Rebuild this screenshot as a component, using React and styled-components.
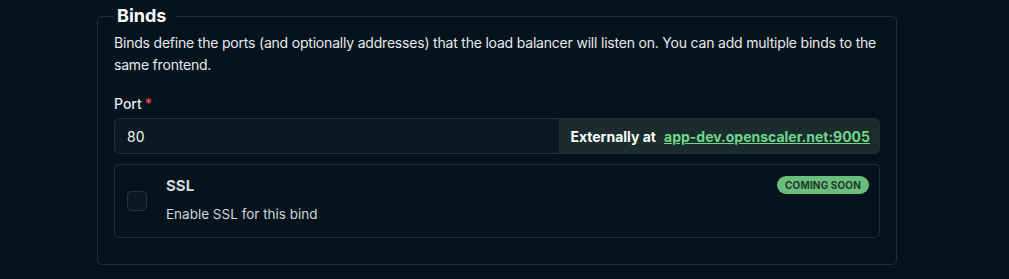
import React from "react";
import styled, { createGlobalStyle } from "styled-components";

const Global = createGlobalStyle`
  html, body { margin: 0; padding: 0; background: #04131c; }
  body { font-family: Inter, "Noto Sans", sans-serif; color: #e6eaee; }
  * { box-sizing: border-box; }
`;

const Page = styled.div`
  padding: 5px 112px 14px 97px;
`;

const Fieldset = styled.fieldset`
  margin: 0;
  border: 1px solid #1f2e38;
  border-radius: 5px;
  padding: 0 16px 26px 16px;
  min-width: 0;
`;

const Legend = styled.legend`
  font-size: 18px;
  font-weight: 700;
  color: #ffffff;
  padding: 0 9px 0 3px;
  line-height: 22px;
`;

const Description = styled.p`
  margin: 5px 0 0 0;
  font-size: 14px;
  line-height: 22px;
  letter-spacing: -0.2px;
  color: #e6eaee;
`;

const Label = styled.label`
  display: block;
  margin-top: 18px;
  font-size: 14px;
  font-weight: 500;
  line-height: 20px;
  color: #e6eaee;
`;

const Required = styled.span`
  color: #e5534b;
  margin-left: 3px;
`;

const InputGroup = styled.div`
  display: flex;
  margin-top: 4px;
  height: 36px;
  border: 1px solid #1f2e38;
  border-radius: 5px;
  overflow: hidden;
  background: #0b1a22;
`;

const Input = styled.input`
  flex: 1;
  min-width: 0;
  border: none;
  outline: none;
  background: transparent;
  color: #f0f3f5;
  font: inherit;
  font-size: 14px;
  padding: 0 12px;
`;

const Addon = styled.div`
  display: flex;
  align-items: center;
  gap: 8px;
  padding: 0 9px 0 10px;
  background: #1a2c2c;
  border-left: 1px solid #1f2e38;
  font-size: 14px;
  font-weight: 700;
  color: #ffffff;
  white-space: nowrap;
`;

const Link = styled.a`
  color: #6fd68a;
  text-decoration: underline;
  font-weight: 700;
`;

const Card = styled.div`
  margin-top: 10px;
  display: flex;
  align-items: flex-start;
  border: 1px solid #1f2e38;
  border-radius: 5px;
  padding: 11px 10px 13px 12px;
`;

const Checkbox = styled.div`
  width: 20px;
  height: 20px;
  border: 1px solid #24333c;
  border-radius: 4px;
  background: #0b1a22;
  margin-top: 15px;
  flex-shrink: 0;
`;

const CardBody = styled.div`
  flex: 1;
  margin-left: 19px;
`;

const CardTitle = styled.div`
  font-size: 15px;
  font-weight: 700;
  line-height: 20px;
  color: #d4d9dd;
`;

const CardText = styled.div`
  margin-top: 8px;
  font-size: 13.5px;
  line-height: 20px;
  color: #cfd5da;
`;

const Badge = styled.span`
  display: inline-flex;
  align-items: center;
  height: 18px;
  padding: 0 8px;
  border-radius: 9px;
  background: #6bbd7d;
  color: #1d3a26;
  font-size: 10px;
  font-weight: 700;
  letter-spacing: 0.15px;
`;

export default function App() {
  return (
    <>
      <Global />
      <Page>
        <Fieldset>
          <Legend>Binds</Legend>
          <Description>
            Binds define the ports (and optionally addresses) that the load balancer will listen on. You can add multiple binds to the same frontend.
          </Description>
          <Label>
            Port<Required>*</Required>
          </Label>
          <InputGroup>
            <Input defaultValue="80" />
            <Addon>
              Externally at <Link href="#">app-dev.openscaler.net:9005</Link>
            </Addon>
          </InputGroup>
          <Card>
            <Checkbox />
            <CardBody>
              <CardTitle>SSL</CardTitle>
              <CardText>Enable SSL for this bind</CardText>
            </CardBody>
            <Badge>COMING SOON</Badge>
          </Card>
        </Fieldset>
      </Page>
    </>
  );
}
